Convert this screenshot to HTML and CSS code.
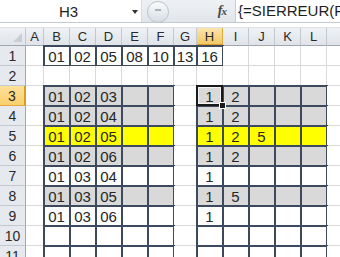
FILE: index.html
```html
<!DOCTYPE html>
<html>
<head>
<meta charset="utf-8">
<link rel="stylesheet" href="styles.css">
</head>
<body>
<div class="app">
  <div class="fbar">
    <div class="namebox"><span class="nb-text">H3</span><span class="nb-arrow"></span></div>
    <div class="ctrl">
      <span class="grip"><span class="grip-dash"></span></span>
      <span class="fx">f<span class="fx-x">x</span></span>
    </div>
    <div class="formula">{=SIERREUR(P</div>
  </div>
  <div class="gap"></div>
  <div class="sheet">
    <div class="h corner"><span class="tri"></span></div>
    <div class="h">A</div><div class="h">B</div><div class="h">C</div><div class="h">D</div><div class="h">E</div><div class="h">F</div><div class="h">G</div><div class="h hs">H</div><div class="h">I</div><div class="h">J</div><div class="h">K</div><div class="h">L</div><div class="h"></div>

    <div class="r">1</div>
    <div class="c"></div><div class="c b">01</div><div class="c b">02</div><div class="c b">05</div><div class="c b">08</div><div class="c b">10</div><div class="c b">13</div><div class="c b">16</div><div class="c"></div><div class="c"></div><div class="c"></div><div class="c"></div><div class="c"></div>

    <div class="r">2</div>
    <div class="c"></div><div class="c"></div><div class="c"></div><div class="c"></div><div class="c"></div><div class="c"></div><div class="c"></div><div class="c"></div><div class="c"></div><div class="c"></div><div class="c"></div><div class="c"></div><div class="c"></div>

    <div class="r rs">3</div>
    <div class="c"></div><div class="c b g">01</div><div class="c b g">02</div><div class="c b g">03</div><div class="c b g"></div><div class="c b g"></div><div class="c"></div><div class="c b g sel">1<span class="selbox"></span><span class="handle"></span></div><div class="c b g">2</div><div class="c b g"></div><div class="c b g"></div><div class="c b g"></div><div class="c"></div>

    <div class="r">4</div>
    <div class="c"></div><div class="c b g">01</div><div class="c b g">02</div><div class="c b g">04</div><div class="c b g"></div><div class="c b g"></div><div class="c"></div><div class="c b g">1</div><div class="c b g">2</div><div class="c b g"></div><div class="c b g"></div><div class="c b g"></div><div class="c"></div>

    <div class="r">5</div>
    <div class="c"></div><div class="c b y">01</div><div class="c b y">02</div><div class="c b y">05</div><div class="c b y"></div><div class="c b y"></div><div class="c"></div><div class="c b y">1</div><div class="c b y">2</div><div class="c b y">5</div><div class="c b y"></div><div class="c b y"></div><div class="c"></div>

    <div class="r">6</div>
    <div class="c"></div><div class="c b g">01</div><div class="c b g">02</div><div class="c b g">06</div><div class="c b g"></div><div class="c b g"></div><div class="c"></div><div class="c b g">1</div><div class="c b g">2</div><div class="c b g"></div><div class="c b g"></div><div class="c b g"></div><div class="c"></div>

    <div class="r">7</div>
    <div class="c"></div><div class="c b">01</div><div class="c b">03</div><div class="c b">04</div><div class="c b"></div><div class="c b"></div><div class="c"></div><div class="c b">1</div><div class="c b"></div><div class="c b"></div><div class="c b"></div><div class="c b"></div><div class="c"></div>

    <div class="r">8</div>
    <div class="c"></div><div class="c b g">01</div><div class="c b g">03</div><div class="c b g">05</div><div class="c b g"></div><div class="c b g"></div><div class="c"></div><div class="c b g">1</div><div class="c b g">5</div><div class="c b g"></div><div class="c b g"></div><div class="c b g"></div><div class="c"></div>

    <div class="r">9</div>
    <div class="c"></div><div class="c b">01</div><div class="c b">03</div><div class="c b">06</div><div class="c b"></div><div class="c b"></div><div class="c"></div><div class="c b">1</div><div class="c b"></div><div class="c b"></div><div class="c b"></div><div class="c b"></div><div class="c"></div>

    <div class="r">10</div>
    <div class="c"></div><div class="c b"></div><div class="c b"></div><div class="c b"></div><div class="c b"></div><div class="c b"></div><div class="c"></div><div class="c b"></div><div class="c b"></div><div class="c b"></div><div class="c b"></div><div class="c b"></div><div class="c"></div>

    <div class="r">11</div>
    <div class="c"></div><div class="c b"></div><div class="c b"></div><div class="c b"></div><div class="c b"></div><div class="c b"></div><div class="c"></div><div class="c b"></div><div class="c b"></div><div class="c b"></div><div class="c b"></div><div class="c b"></div><div class="c"></div>
  </div>
</div>
</body>
</html>
```

FILE: styles.css
```css
html, body {
  margin: 0;
  padding: 0;
  background: #ffffff;
  overflow: hidden;
}
.app {
  width: 340px;
  height: 257px;
  overflow: hidden;
  font-family: "Liberation Sans", Arial, sans-serif;
}
.fbar {
  display: flex;
  height: 22px;
  border-bottom: 1px solid #c3c9d1;
  background: #e9ecf0;
}
.namebox {
  width: 142px;
  background: #ffffff;
  position: relative;
  display: flex;
  align-items: center;
  justify-content: center;
  border-right: 1px solid #d5dae0;
  box-sizing: border-box;
}
.nb-text {
  font-size: 15px;
  color: #1e1e1e;
  margin-left: -4px;
}
.nb-arrow {
  position: absolute;
  right: 3px;
  top: 10px;
  width: 0;
  height: 0;
  border-left: 3px solid transparent;
  border-right: 3px solid transparent;
  border-top: 4px solid #333;
}
.ctrl {
  width: 93px;
  display: flex;
  align-items: center;
  justify-content: space-between;
  padding: 0 9px 0 5px;
  box-sizing: border-box;
  background: linear-gradient(#eef1f4, #e2e6eb);
}
.grip {
  width: 22px;
  height: 22px;
  border-radius: 50%;
  border: 1px solid #bcc3cc;
  box-sizing: border-box;
  background: linear-gradient(#fafbfc, #d8dde3);
  display: flex;
  align-items: center;
  justify-content: center;
  margin-top: 1px;
}
.grip-dash {
  width: 6px;
  height: 2px;
  background: #aab2bc;
  margin-top: -3px;
}
.fx {
  font-family: "Liberation Serif", serif;
  font-style: italic;
  font-weight: bold;
  font-size: 14px;
  color: #4a4a4a;
  letter-spacing: -1px;
}
.fx-x {
  font-size: 11px;
}
.formula {
  flex: 1;
  background: #ffffff;
  font-size: 15px;
  line-height: 22px;
  padding-left: 2px;
  color: #1e1e1e;
  white-space: nowrap;
  overflow: hidden;
  border-left: 1px solid #c9ced5;
}
.gap {
  height: 4px;
  border-bottom: 1px solid #dfe3e8;
}
.sheet {
  display: grid;
  grid-template-columns: 26px 18px repeat(5, 26px) 23px repeat(5, 26px) 26px;
  grid-template-rows: 18px repeat(11, 20px);
}
.h, .r {
  box-sizing: border-box;
  background: linear-gradient(#eef1f4, #e0e4e9);
  border-right: 1px solid #c2c8cf;
  border-bottom: 1px solid #9ea7b2;
  font-size: 13px;
  color: #2a2a2a;
  display: flex;
  align-items: center;
  justify-content: center;
}
.r {
  background: #e6e9ee;
  border-bottom: 1px solid #c2c8cf;
  border-right: 1px solid #9ea7b2;
  font-size: 14px;
}
.corner {
  position: relative;
}
.tri {
  position: absolute;
  right: 3px;
  bottom: 3px;
  width: 0;
  height: 0;
  border-left: 9px solid transparent;
  border-bottom: 9px solid #c9ced4;
}
.hs {
  background: linear-gradient(#fbe5ae, #f3c865);
  border-right: 1px solid #e3a93c;
  border-bottom: 2px solid #d99a29;
}
.rs {
  background: linear-gradient(#fde09a, #f8cf6a);
  border-bottom: 1px solid #e3a93c;
  border-right: 2px solid #d99a29;
}
.c {
  box-sizing: border-box;
  border-right: 1px solid #d9d9d9;
  border-bottom: 1px solid #d9d9d9;
  font-size: 15px;
  color: #262626;
  display: flex;
  align-items: center;
  justify-content: center;
  padding-top: 2px;
  background: #ffffff;
}
.b {
  outline: 2px solid #3d4a5e;
  outline-offset: -1px;
}
.g {
  background: #d9d9d9;
}
.y {
  background: #ffff00;
}
.sel {
  position: relative;
}
.selbox {
  position: absolute;
  left: -1px;
  top: -1px;
  right: -1px;
  bottom: -1px;
  border: 2px solid #1a1a1a;
  box-shadow: inset 0 0 0 1px #f2f2f2;
  z-index: 2;
}
.handle {
  position: absolute;
  right: -4px;
  bottom: -4px;
  width: 5px;
  height: 5px;
  background: #1a1a1a;
  border: 1px solid #ffffff;
  z-index: 3;
}
```
